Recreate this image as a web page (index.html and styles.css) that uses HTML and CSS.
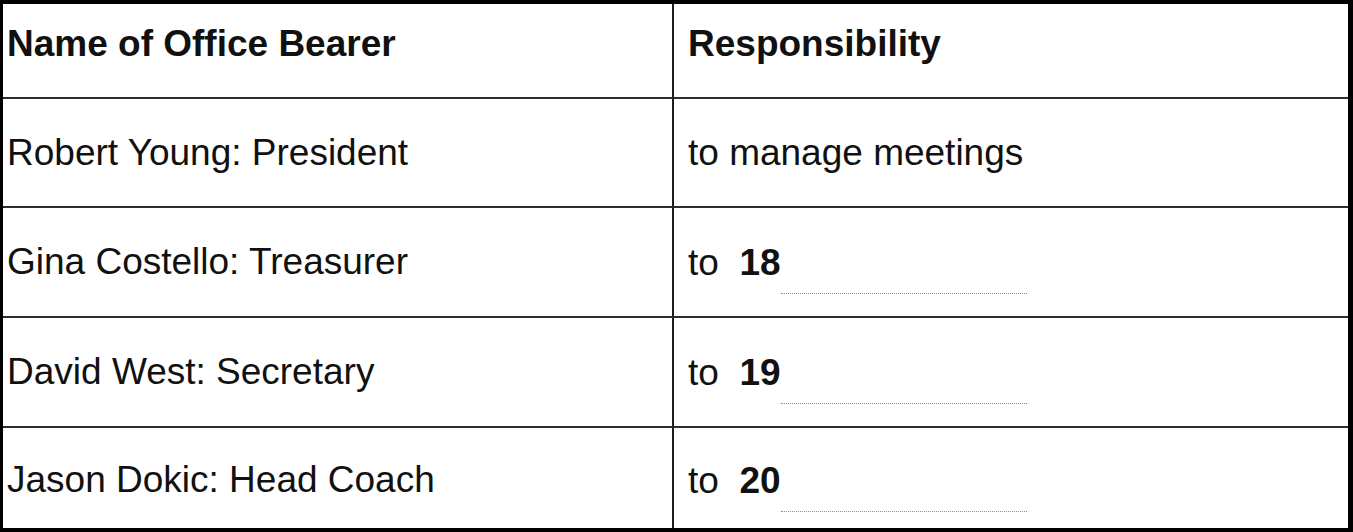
FILE: index.html
```html
<!DOCTYPE html>
<html>
<head>
<meta charset="utf-8">
<link rel="stylesheet" href="styles.css">
</head>
<body>
<div class="frame">
  <div class="table">
    <div class="cell head left">Name of Office Bearer</div>
    <div class="cell head right">Responsibility</div>

    <div class="cell r1 left">Robert Young: President</div>
    <div class="cell r1 right">to manage meetings</div>

    <div class="cell r2 left">Gina Costello: Treasurer</div>
    <div class="cell r2 right"><span class="line">to&nbsp;&nbsp;<b>18</b><span class="blank"></span></span></div>

    <div class="cell r3 left">David West: Secretary</div>
    <div class="cell r3 right"><span class="line">to&nbsp;&nbsp;<b>19</b><span class="blank"></span></span></div>

    <div class="cell r4 left last">Jason Dokic: Head Coach</div>
    <div class="cell r4 right last"><span class="line">to&nbsp;&nbsp;<b>20</b><span class="blank"></span></span></div>
  </div>
</div>
</body>
</html>
```

FILE: styles.css
```css
html, body {
  margin: 0;
  padding: 0;
  background: #000;
}

.frame {
  width: 1353px;
  height: 532px;
  box-sizing: border-box;
  border-style: solid;
  border-color: #000;
  border-width: 4px 5px 4px 3px;
  background: #fff;
}

.table {
  display: grid;
  grid-template-columns: 671px 1fr;
  grid-template-rows: 95px 109px 110px 110px 100px;
  height: 100%;
  font-family: "Liberation Sans", Arial, sans-serif;
  font-size: 37px;
  color: #111;
}

.cell {
  display: flex;
  align-items: center;
  box-sizing: border-box;
  border-bottom: 2px solid #2e2e2e;
  white-space: nowrap;
}

.cell.last {
  border-bottom: none;
}

.left {
  padding-left: 4px;
  border-right: 2px solid #1e1e1e;
}

.right {
  padding-left: 14px;
}

.head {
  font-weight: bold;
  padding-bottom: 14px;
}

.r4 {
  padding-top: 4px;
}

.line {
  margin-bottom: -11px;
}

.line b {
  font-weight: bold;
}

.blank {
  display: inline-block;
  width: 246px;
  height: 0;
  border-bottom: 1px dotted #8a8a8a;
  vertical-align: -19px;
}
```
